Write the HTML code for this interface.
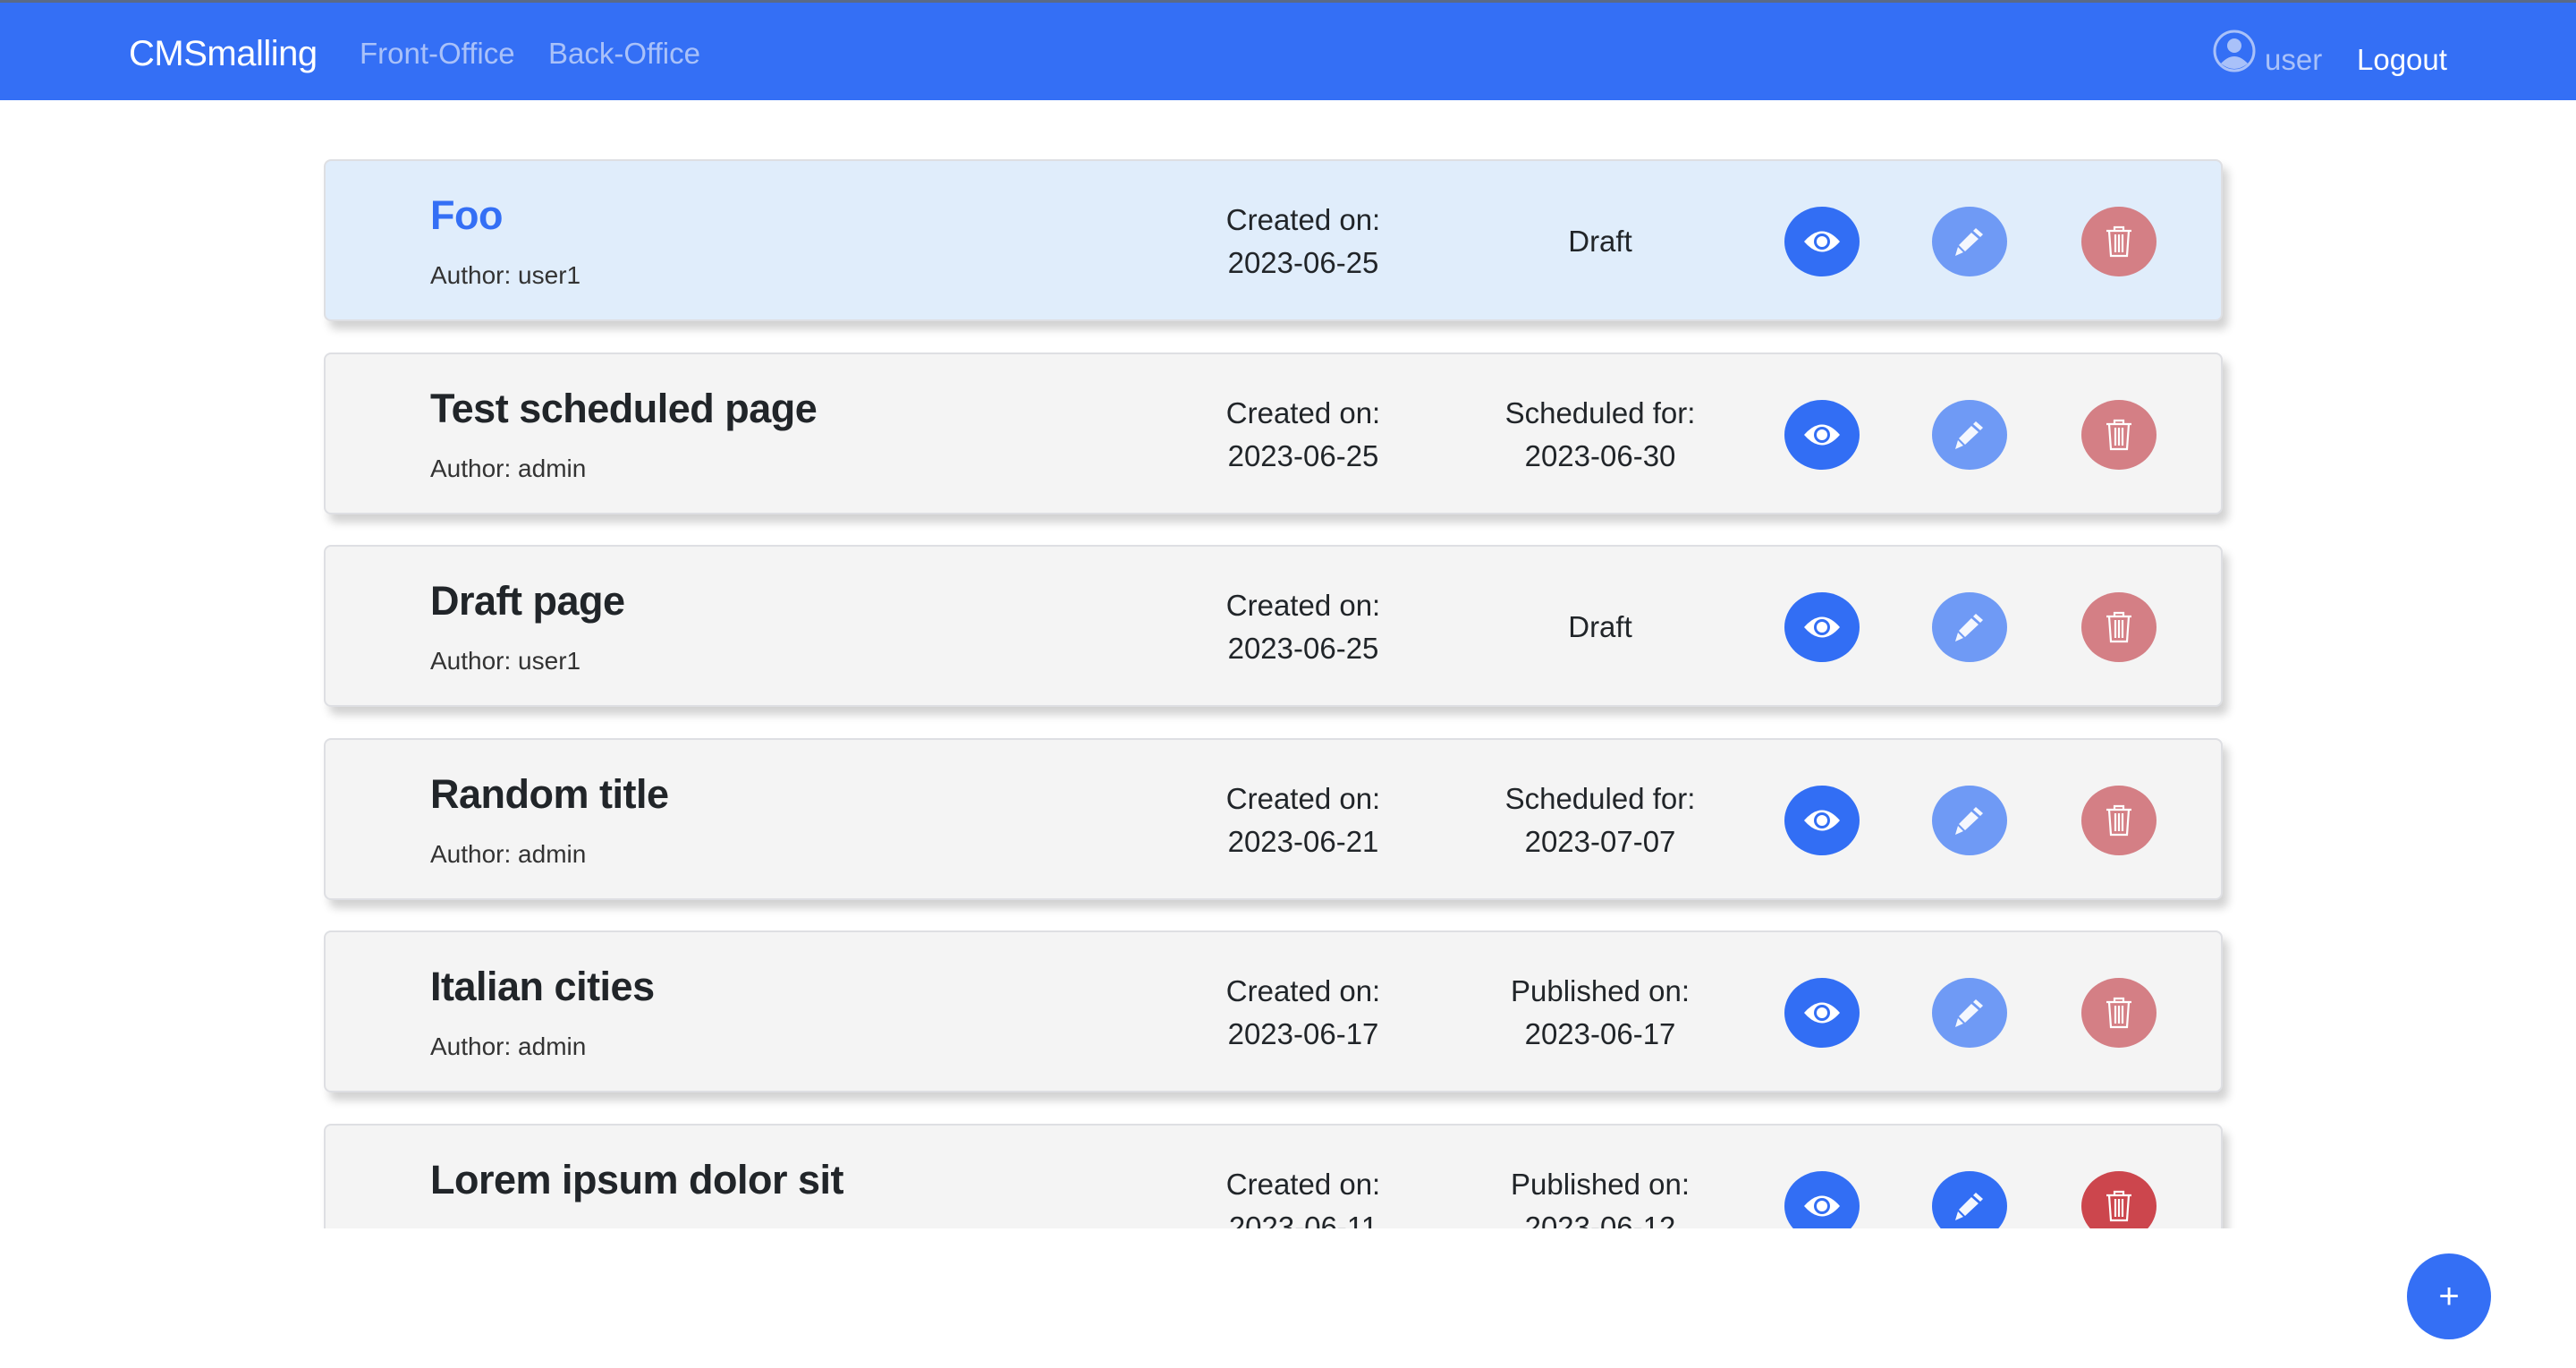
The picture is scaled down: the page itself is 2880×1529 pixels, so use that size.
<!DOCTYPE html>
<html><head><meta charset="utf-8"><style>
*{margin:0;padding:0;box-sizing:border-box}
html,body{width:2880px;height:1529px;overflow:hidden;background:#fff;font-family:"Liberation Sans",Arial,sans-serif;color:#212529}
.nav{position:absolute;left:0;top:0;width:2880px;height:112px;background:#346ff5;border-top:3px solid #5a6a86}
.t{position:absolute;white-space:nowrap;line-height:1}
.brand{left:144px;top:37px;font-size:40px;color:#fff;letter-spacing:-0.5px}
.lnk{font-size:33px;color:#a9c1f9;top:40px}
.wrap{position:absolute;left:0;top:112px;width:2880px;height:1261px;overflow:hidden}
.card{position:absolute;left:362px;width:2123px;height:181px;background:#f4f4f4;border:2px solid #dedfe3;border-radius:8px;box-shadow:6px 9px 10px rgba(0,0,0,0.18)}
.card.sel{background:#e0edfb}
.title{left:117px;top:38px;font-size:45px;font-weight:bold;color:#212529;letter-spacing:-0.5px}
.author{left:117px;top:114px;font-size:28px;color:#333}
.col{position:absolute;width:320px;text-align:center;font-size:33px;line-height:48px;color:#212529}
.btn{position:absolute;width:84px;height:78px;border-radius:50%;top:51px;display:flex;align-items:center;justify-content:center}
.b1{left:1631px;background:#326ef4}
.b2{left:1796px;background:#6f9af5}
.b3{left:1963px;background:#d47f85}
.plus{position:absolute;left:2691px;top:1401px;width:94px;height:96px;border-radius:50%;background:#346ff5;color:#fff;font-size:40px;display:flex;align-items:center;justify-content:center}
</style></head><body>
<div class="nav">
<div class="t brand">CMSmalling</div>
<div class="t lnk" style="left:402px">Front-Office</div>
<div class="t lnk" style="left:613px">Back-Office</div>
<svg style="position:absolute;left:2474px;top:30px" width="48" height="48" viewBox="0 0 48 48"><circle cx="24" cy="24" r="22" fill="none" stroke="#a9c1f9" stroke-width="3"/><circle cx="24" cy="18" r="8" fill="#a9c1f9"/><path d="M9 38 Q24 22 39 38 Q24 50 9 38Z" fill="#a9c1f9"/></svg>
<div class="t lnk" style="left:2532px;top:47px;font-size:33px">user</div>
<div class="t" style="left:2635px;top:47px;font-size:33px;color:#fff">Logout</div>
</div>
<div class="wrap">
<div class="card sel" style="top:66px"><div class="t title" style="color:#346ff5">Foo</div><div class="t author">Author: user1</div>
<div class="col" style="left:933px;top:42px">Created on:<br>2023-06-25</div><div class="col" style="left:1265px;top:66px">Draft</div>
<div class="btn b1"><svg width="44" height="30" viewBox="0 0 44 30"><path d="M2 15 Q22 -8 42 15 Q22 38 2 15Z" fill="#fff"/><circle cx="22" cy="15" r="9" fill="#326ef4"/><circle cx="22" cy="15" r="6" fill="#fff"/></svg></div>
<div class="btn b2"><svg width="34" height="34" viewBox="0 0 34 34"><path d="M24 2 L32 9 L29 12 L21 5Z M19 7 L27 14 L12 28 L5 21Z M4 23 L10 29 L1 33Z" fill="#f4f7fe"/></svg></div>
<div class="btn b3"><svg width="30" height="36" viewBox="0 0 30 36"><path d="M1 6 H29 M10 6 V2 H20 V6 M4 6 L6 34 H24 L26 6 M11 10 V30 M15 10 V30 M19 10 V30" fill="none" stroke="#fff" stroke-width="2.2"/></svg></div>
</div>
</div>
<div class="plus">+</div>
<script>
var rows=[["Test scheduled page","admin","2023-06-25","Scheduled for:<br>2023-06-30"],["Draft page","user1","2023-06-25","Draft"],["Random title","admin","2023-06-21","Scheduled for:<br>2023-07-07"],["Italian cities","admin","2023-06-17","Published on:<br>2023-06-17"],["Lorem ipsum dolor sit","admin","2023-06-11","Published on:<br>2023-06-12"]];
var w=document.querySelector('.wrap'),f=document.querySelector('.card');
rows.forEach(function(r,i){var c=f.cloneNode(true);c.classList.remove('sel');c.style.top=(66+215.5*(i+1))+'px';
var t=c.querySelector('.title');t.textContent=r[0];t.style.color='#212529';
c.querySelector('.author').textContent='Author: '+r[1];
var cols=c.querySelectorAll('.col');cols[0].innerHTML='Created on:<br>'+r[2];cols[1].innerHTML=r[3];
if(r[3]!='Draft')cols[1].style.top='42px';
if(i==4){c.querySelector('.b2').style.background='#326ef4';c.querySelector('.b3').style.background='#cc464d';}
w.appendChild(c);});
</script>
</body></html>
